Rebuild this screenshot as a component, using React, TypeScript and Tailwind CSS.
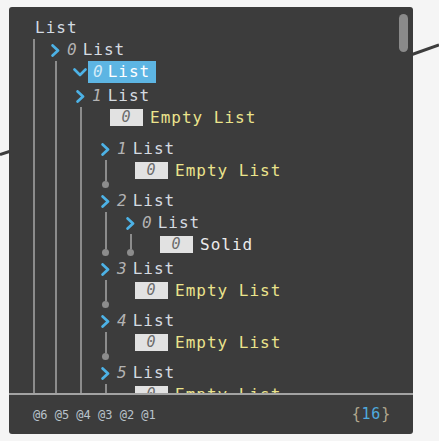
import React from "react";

const lineCol = "bg-[#8c8c8c]";

function Chevron({ open = false }: { open?: boolean }) {
  if (open) {
    return (
      <svg width="14" height="9" viewBox="0 0 14 9" fill="none">
        <path d="M1.5 1.5 L7 7 L12.5 1.5" stroke="#4db2e6" strokeWidth="2.6" strokeLinecap="round" strokeLinejoin="round" />
      </svg>
    );
  }
  return (
    <svg width="9" height="13" viewBox="0 0 9 13" fill="none">
      <path d="M1.6 1.4 L7 6.5 L1.6 11.6" stroke="#4db2e6" strokeWidth="2.7" strokeLinecap="round" strokeLinejoin="round" />
    </svg>
  );
}

function Header({ idx, open, selected }: { idx: number; open?: boolean; selected?: boolean }) {
  return (
    <div className="flex h-[22px] items-center">
      <span className="flex w-[14px] justify-center">
        <Chevron open={open} />
      </span>
      {selected ? (
        <span className="ml-[1px] flex h-full items-center bg-[#5db5e3] pl-[5px] pr-[6px]">
          <span className="italic text-[#d3ebf8]">{idx}</span>
          <span className="ml-[4px] text-white">List</span>
        </span>
      ) : (
        <span className="ml-[5px] flex items-center">
          <span className="italic text-[#b3b3b3]">{idx}</span>
          <span className="ml-[5px] text-[#d5dbe1]">List</span>
        </span>
      )}
    </div>
  );
}

function Leaf({ text, mb = "" }: { text: string; mb?: string }) {
  const solid = text === "Solid";
  return (
    <div className={`flex h-[21px] items-center pl-[12px] ${mb}`}>
      <span className="flex h-[17px] w-[33px] items-center justify-center bg-[#e2e2e2] text-[15px] italic text-[#6b6b6b]">
        0
      </span>
      <span className={`ml-[7px] ${solid ? "text-[#ececec]" : "text-[#ebe48c]"}`}>{text}</span>
    </div>
  );
}

function Children({
  children,
  dot,
  pb = "",
  dotMb = "",
  col = "w-[15px]",
}: {
  children: React.ReactNode;
  dot?: boolean;
  pb?: string;
  dotMb?: string;
  col?: string;
}) {
  return (
    <div className="flex">
      <div className={`flex shrink-0 flex-col items-center ${col}`}>
        <div className={`w-[2px] flex-1 ${lineCol}`} />
        {dot ? <div className={`h-[7px] w-[7px] rounded-full ${lineCol} ${dotMb}`} /> : null}
      </div>
      <div className={`flex flex-col pl-[10px] ${pb}`}>{children}</div>
    </div>
  );
}

function SingleItem({ idx }: { idx: number }) {
  return (
    <div>
      <Header idx={idx} />
      <Children dot pb="pb-[9px]" dotMb="mb-[2px]">
        <Leaf text="Empty List" />
      </Children>
    </div>
  );
}

export default function App() {
  return (
    <div className="relative h-[441px] w-[439px] overflow-hidden bg-[#f5f5f5] font-['DejaVu_Sans_Mono',monospace] text-[16px] tracking-[1px]">
      <svg className="absolute inset-0" width="439" height="441">
        <line x1="0" y1="154.5" x2="14" y2="150" stroke="#3d3d3d" strokeWidth="3" />
        <line x1="405" y1="57" x2="439" y2="45" stroke="#3d3d3d" strokeWidth="3" />
      </svg>

      <div className="relative ml-[9px] mt-[7px] flex h-[427px] w-[404px] flex-col overflow-hidden rounded-[3px] bg-[#3c3c3c]">
        <div className="relative h-[386px] overflow-hidden pt-[10px]">
          <div className="ml-[21px]">
            <div className="flex h-[22px] items-center pl-[5px] text-[#d3dbe3]">List</div>
            <Children col="w-[8px]">
              <Header idx={0} />
              <Children>
                <div className="mb-[2px]">
                  <Header idx={0} open selected />
                </div>
                <Header idx={1} />
                <Children>
                  <Leaf text="Empty List" mb="mb-[10px]" />
                  <SingleItem idx={1} />
                  <div>
                    <Header idx={2} />
                    <Children dot pb="pb-[2px]" dotMb="mb-[2px]">
                      <Header idx={0} />
                      <Children dot pb="pb-[1px]">
                        <Leaf text="Solid" />
                      </Children>
                    </Children>
                  </div>
                  <SingleItem idx={3} />
                  <SingleItem idx={4} />
                  <SingleItem idx={5} />
                  <SingleItem idx={6} />
                </Children>
              </Children>
            </Children>
          </div>
          <div className="absolute right-[5px] top-[7px] h-[38px] w-[9px] rounded-full bg-[#8a8a8a]" />
        </div>
        <div className="h-[2px] bg-[#a3a3a3]" />
        <div className="flex flex-1 items-center justify-between pl-[24px] pr-[22px]">
          <span className="text-[12px] tracking-normal text-[#b9c3cb]">@6 @5 @4 @3 @2 @1</span>
          <span className="text-[15px] tracking-[0.8px]">
            <span className="text-[#b3a98f]">{"{"}</span>
            <span className="text-[#4fa9de]">16</span>
            <span className="text-[#b3a98f]">{"}"}</span>
          </span>
        </div>
      </div>
    </div>
  );
}
